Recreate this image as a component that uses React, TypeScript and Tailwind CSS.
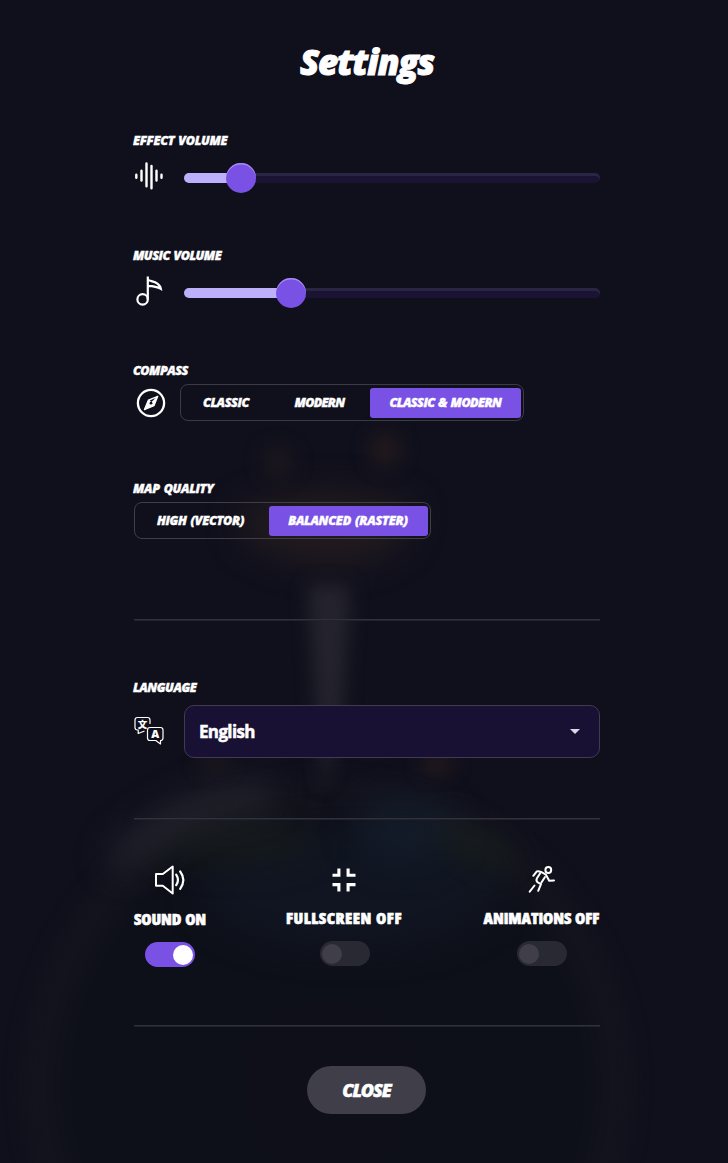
import React from "react";

const FONT = "font-['Open_Sans','Noto_Sans',sans-serif]";

function Backdrop() {
  return (
    <svg className="absolute inset-0 h-full w-full" viewBox="0 0 728 1163" preserveAspectRatio="none" aria-hidden="true">
      <defs>
        <filter id="soft" x="-100%" y="-100%" width="300%" height="300%" colorInterpolationFilters="sRGB"><feGaussianBlur stdDeviation="16" /></filter>
        <filter id="tight" x="-100%" y="-100%" width="300%" height="300%" colorInterpolationFilters="sRGB"><feGaussianBlur stdDeviation="9" /></filter>
        <radialGradient id="globe" gradientUnits="userSpaceOnUse" cx="328" cy="1085" r="315">
          <stop offset="0" stopColor="#0e0f19" />
          <stop offset="0.82" stopColor="#0e1019" />
          <stop offset="0.94" stopColor="#14141e" />
          <stop offset="1" stopColor="#13131e" />
        </radialGradient>
      </defs>
      <rect width="728" height="1163" fill="#10101c" />
      <circle cx="328" cy="1085" r="305" fill="url(#globe)" filter="url(#tight)" />
      <ellipse cx="350" cy="890" rx="150" ry="60" fill="#101521" filter="url(#soft)" />
      <ellipse cx="235" cy="840" rx="80" ry="22" fill="#161b1c" filter="url(#soft)" />
      <ellipse cx="405" cy="830" rx="50" ry="35" fill="#131b28" filter="url(#soft)" />
      <ellipse cx="475" cy="845" rx="45" ry="14" fill="#181f1d" filter="url(#soft)" transform="rotate(28 475 845)" />
      <path d="M115 865 Q180 795 270 795" fill="none" stroke="#24242e" strokeWidth="26" filter="url(#soft)" />
      <path d="M240 510 Q325 470 415 510 L400 545 Q330 590 245 540Z" fill="#211a1f" filter="url(#soft)" />
      <ellipse cx="278" cy="462" rx="16" ry="16" fill="#1b171d" filter="url(#tight)" />
      <ellipse cx="385" cy="450" rx="16" ry="18" fill="#21191d" filter="url(#tight)" />
      <path d="M308 585 L350 585 L342 715 L325 790 L317 715Z" fill="#25242e" filter="url(#tight)" />
      <ellipse cx="215" cy="763" rx="15" ry="9" fill="#1d181d" filter="url(#tight)" />
      <ellipse cx="437" cy="765" rx="16" ry="9" fill="#271c1e" filter="url(#tight)" />
    </svg>
  );
}

function Label({ children, className }: { children: React.ReactNode; className: string }) {
  return (
    <div className="flex h-[18px] items-center">
      <span className={`mt-[2px] -ml-px whitespace-nowrap text-[12.5px] leading-[18px] font-extrabold italic [-webkit-text-stroke:0.4px_#fff] [word-spacing:1px] ${className}`}>{children}</span>
    </div>
  );
}

function Slider({ fill }: { fill: number }) {
  return (
    <div className="relative flex h-[30px] w-[416px] items-center">
      <div className="h-[10px] w-full overflow-hidden rounded-[5px] bg-[#1a1333] shadow-[inset_0_3px_0_#2b2544]">
        <div className="h-full bg-[#bdb0fb]" style={{ width: fill }} />
      </div>
      <div
        className="absolute top-0 size-[30px] rounded-full bg-[#7951e4] shadow-[inset_0_1.5px_0_#a48df0]"
        style={{ left: fill - 15 }}
      />
    </div>
  );
}

function WaveIcon() {
  return (
    <svg className="size-[30px]" viewBox="0 0 30 30" fill="none" stroke="#fff" strokeWidth="2.4" strokeLinecap="round">
      <path d="M2.3 13.7v3M7.5 9.8v9.8M12.5 2.4v22.8M17.5 5V27.2M22.5 9.8v9.8M27.5 13.7v3" />
    </svg>
  );
}

function NoteIcon() {
  return (
    <svg className="size-[30px]" viewBox="0 0 30 30" fill="none" stroke="#fff" strokeWidth="2.2">
      <circle cx="8.6" cy="23.4" r="5.2" />
      <path d="M13.8 23.4V0.4M13.8 3.4C15 6 25 4 26.8 12.7C23 10.5 18 10 13.8 9.8" />
    </svg>
  );
}

function CompassIcon() {
  return (
    <svg className="size-[30px]" viewBox="0 0 30 30" fill="none">
      <circle cx="15" cy="15" r="13.1" stroke="#fff" strokeWidth="2.3" />
      <path d="M21.8 8.2 12.4 12 8.4 21.6 18 17.8Z" fill="#fff" stroke="#fff" strokeWidth="1.2" strokeLinejoin="round" />
      <path d="m19.6 9.9-5.8 2.5 1.6 1.6Z" fill="#11101c" />
      <circle cx="15" cy="15.2" r="1.4" fill="#11101c" />
    </svg>
  );
}

function TranslateIcon() {
  return (
    <svg className="size-[30px]" viewBox="0 0 30 30" fill="none" stroke="#fff" strokeWidth="1.2" strokeLinejoin="round" strokeLinecap="round">
      <path d="M10 15.2 4.2 17.5V14H3.5Q1 14 1 11.5V4Q1 1.5 3.5 1.5H13.5Q16 1.5 16 4V7.5" />
      <path d="M16 11.5H26.5Q29 11.5 29 14V22Q29 24.5 26.5 24.5H26.5V28L21.8 24.5H16Q13.5 24.5 13.5 22V14Q13.5 11.5 16 11.5Z" />
      <text x="8.6" y="11.9" textAnchor="middle" fontSize="9.5" fontWeight="900" fill="#fff" stroke="none" fontFamily="Noto Sans CJK JP, sans-serif">文</text>
      <text x="21.2" y="22" textAnchor="middle" fontSize="11" fontWeight="800" fill="#fff" stroke="none" fontFamily="Open Sans, sans-serif">A</text>
    </svg>
  );
}

function SoundIcon() {
  return (
    <svg className="h-[30px] w-[32px]" viewBox="0 0 32 30" fill="none" stroke="#fff" strokeWidth="2" strokeLinejoin="round">
      <path d="M2 9H8.8L18.7 1.5V28.5L8.8 20.8H2Z" />
      <path d="M22.2 9.6Q25.7 15 22.2 20.2M26.2 6.5Q32.5 15 26.2 23.8" strokeWidth="2.2" strokeLinecap="round" />
    </svg>
  );
}

function ShrinkIcon() {
  return (
    <svg className="size-[30px]" viewBox="0 0 30 30" fill="none" stroke="#fff" strokeWidth="3.1">
      <path d="M3.5 10.3H9.9V3.5M19.1 3.5V10.3H26.5M3.5 19.6H9.9V26.5M19.1 26.5V19.6H26.5" />
    </svg>
  );
}

function RunIcon() {
  return (
    <svg className="size-[30px]" viewBox="0 0 30 30" fill="none" stroke="#fff" strokeWidth="2" strokeLinecap="round" strokeLinejoin="round">
      <circle cx="21.3" cy="5" r="2.9" />
      <path d="M6.3 10.8 9.8 6.4Q12.5 5.6 18.8 9.6L22.2 15.8 27 15.4" />
      <path d="M13 8.4 9.8 13.6Q8.8 16 10.8 17.3L14 19.2 11.2 25.8M18 12 14.6 17.3M7.5 20.5 2.7 26.6" />
    </svg>
  );
}

function Segment({ children, active, className }: { children: React.ReactNode; active?: boolean; className: string }) {
  return (
    <button className={`flex h-[30px] items-center justify-center rounded-[3px] pt-px text-[12.5px] font-extrabold italic whitespace-nowrap [-webkit-text-stroke:0.4px_#fff] [word-spacing:1px] ${active ? "bg-[#7951e4]" : ""} ${className}`}>
      {children}
    </button>
  );
}

function Toggle({ on }: { on?: boolean }) {
  return (
    <div className={`flex h-[25px] w-[50px] items-center rounded-full ${on ? "justify-end bg-[#7951e4] pr-[2px]" : "bg-[#292933] pl-[2px]"}`}>
      <div className={`size-5 rounded-full ${on ? "bg-white" : "bg-[#403f49]"}`} />
    </div>
  );
}

function ToggleName({ children, className }: { children: React.ReactNode; className: string }) {
  return (
    <span className={`text-[16.5px] leading-[24px] font-extrabold whitespace-nowrap [font-stretch:85%] [-webkit-text-stroke:0.6px_#fff] [word-spacing:1px] ${className}`}>{children}</span>
  );
}

function Divider() {
  return <div className="h-px w-full bg-[#31313c] shadow-[0_1px_0_#22222d]" />;
}

export default function App() {
  return (
    <div className={`relative h-[1163px] w-[728px] overflow-hidden bg-[#10101c] text-white ${FONT}`}>
      <Backdrop />
      <main className="relative ml-[134px] flex w-[466px] flex-col">
        <h1 className="mt-[36px] h-[52px] text-center text-[35px] leading-[51px] font-extrabold tracking-[-1px] italic [-webkit-text-stroke:1px_#fff]">Settings</h1>

        <section className="mt-[43px] h-[115px]">
          <Label className="tracking-[-0.28px]">EFFECT VOLUME</Label>
          <div className="mt-[12px] flex items-start gap-5">
            <WaveIcon />
            <div className="mt-[2px]"><Slider fill={57} /></div>
          </div>
        </section>

        <section className="h-[115px]">
          <Label className="tracking-[-0.5px]">MUSIC VOLUME</Label>
          <div className="mt-[12px] flex items-start gap-5">
            <NoteIcon />
            <div className="mt-[2px]"><Slider fill={107} /></div>
          </div>
        </section>

        <section className="h-[118px]">
          <Label className="tracking-[-0.5px]">COMPASS</Label>
          <div className="mt-[5px] flex items-center">
            <div className="ml-[2px]"><CompassIcon /></div>
            <div className="ml-[14px] flex h-[37px] w-[344px] items-center rounded-[8px] border border-[#3b3a45] px-[2px]">
              <Segment className="w-[87px] pr-px tracking-[-0.4px]">CLASSIC</Segment>
              <Segment className="w-[100px] pr-px tracking-[-0.7px]">MODERN</Segment>
              <Segment active className="w-[151px] tracking-[-0.55px]">CLASSIC &amp; MODERN</Segment>
            </div>
          </div>
        </section>

        <section className="h-[140px]">
          <Label className="tracking-[-0.3px]">MAP QUALITY</Label>
          <div className="mt-[5px] flex h-[37px] w-[297px] items-center rounded-[8px] border border-[#3f3e47] px-[2px]">
            <Segment className="w-[132px] pr-[5px] tracking-[-0.33px]">HIGH (VECTOR)</Segment>
            <Segment active className="w-[159px] pr-px tracking-[-0.25px]">BALANCED (RASTER)</Segment>
          </div>
        </section>

        <Divider />

        <section className="mt-[58px] h-[140px]">
          <Label className="tracking-[-0.4px]">LANGUAGE</Label>
          <div className="mt-[9px] flex h-[53px] items-center gap-5">
            <div className="-mt-[2px]"><TranslateIcon /></div>
            <button className="flex h-[53px] w-[416px] items-center justify-between rounded-[10px] border border-[#403a55] bg-[#181134] pr-[19px] pl-[14px]">
              <span className="text-[17px] font-bold tracking-[-0.65px] [-webkit-text-stroke:0.5px_#fff]">English</span>
              <svg className="h-[5px] w-[10px]" viewBox="0 0 10 5" fill="#dcd9e5"><path d="M0 0h10L5 5Z" /></svg>
            </button>
          </div>
        </section>

        <Divider />

        <section className="mt-[46px] flex h-[160px] items-start justify-between">
          <div className="flex w-[72px] flex-col items-center">
            <SoundIcon />
            <ToggleName className="mt-[12px] tracking-[-0.1px]">SOUND ON</ToggleName>
            <div className="mt-[11px]"><Toggle on /></div>
          </div>
          <div className="-ml-px flex w-[117px] flex-col items-center">
            <ShrinkIcon />
            <ToggleName className="mt-[11px] tracking-[0.45px]">FULLSCREEN OFF</ToggleName>
            <div className="mt-[11px] ml-px"><Toggle /></div>
          </div>
          <div className="flex w-[117px] flex-col items-center">
            <RunIcon />
            <ToggleName className="mt-[11px] tracking-[-0.1px]">ANIMATIONS OFF</ToggleName>
            <div className="mt-[11px]"><Toggle /></div>
          </div>
        </section>

        <Divider />

        <button className="mt-[40px] ml-[173px] h-[48px] w-[119px] rounded-full bg-[#403f49] text-[18px] leading-[47px] font-extrabold tracking-[-1.1px] italic [-webkit-text-stroke:0.5px_#fff]">CLOSE</button>
      </main>
    </div>
  );
}
